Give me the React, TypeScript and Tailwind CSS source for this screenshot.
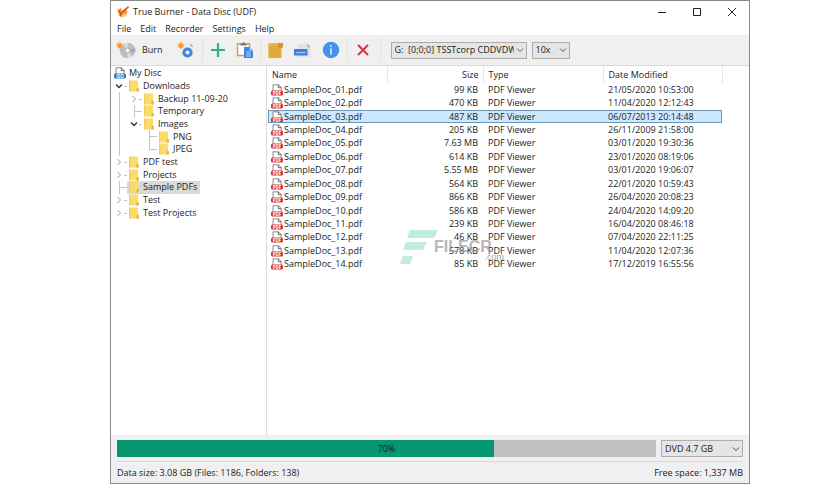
import React, { useState } from 'react';

type Guide = 'line' | 'blank' | 'open' | 'closed' | 'tee' | 'corner';

interface TreeNode {
    label: string;
    guides: Guide[];
}

interface DiscFile {
    name: string;
    size: string;
    modified: string;
}

const folders: TreeNode[] = [
    { label: 'Downloads', guides: ['open'] },
    { label: 'Backup 11-09-20', guides: ['line', 'closed'] },
    { label: 'Temporary', guides: ['line', 'tee'] },
    { label: 'Images', guides: ['line', 'open'] },
    { label: 'PNG', guides: ['line', 'blank', 'tee'] },
    { label: 'JPEG', guides: ['line', 'blank', 'corner'] },
    { label: 'PDF test', guides: ['closed'] },
    { label: 'Projects', guides: ['closed'] },
    { label: 'Sample PDFs', guides: ['tee'] },
    { label: 'Test', guides: ['closed'] },
    { label: 'Test Projects', guides: ['closed'] },
];

const files: DiscFile[] = [
    { name: 'SampleDoc_01.pdf', size: '99 KB', modified: '21/05/2020 10:53:00' },
    { name: 'SampleDoc_02.pdf', size: '470 KB', modified: '11/04/2020 12:12:43' },
    { name: 'SampleDoc_03.pdf', size: '487 KB', modified: '06/07/2013 20:14:48' },
    { name: 'SampleDoc_04.pdf', size: '205 KB', modified: '26/11/2009 21:58:00' },
    { name: 'SampleDoc_05.pdf', size: '7.63 MB', modified: '03/01/2020 19:30:36' },
    { name: 'SampleDoc_06.pdf', size: '614 KB', modified: '23/01/2020 08:19:06' },
    { name: 'SampleDoc_07.pdf', size: '5.55 MB', modified: '03/01/2020 19:06:07' },
    { name: 'SampleDoc_08.pdf', size: '564 KB', modified: '22/01/2020 10:59:43' },
    { name: 'SampleDoc_09.pdf', size: '866 KB', modified: '26/04/2020 20:08:23' },
    { name: 'SampleDoc_10.pdf', size: '586 KB', modified: '24/04/2020 14:09:20' },
    { name: 'SampleDoc_11.pdf', size: '239 KB', modified: '16/04/2020 08:46:18' },
    { name: 'SampleDoc_12.pdf', size: '46 KB', modified: '07/04/2020 22:11:25' },
    { name: 'SampleDoc_13.pdf', size: '578 KB', modified: '11/04/2020 12:07:36' },
    { name: 'SampleDoc_14.pdf', size: '85 KB', modified: '17/12/2019 16:55:56' },
];

const Flame = () => (
    <>
        <path d="M1 1.5 3 3 3.5 0 6 3 7 2.5 6.5 6 4.5 8 2 7 .5 4.5Z" fill="#fbb04c" />
        <path d="M3 4 4.5 3 5.5 5 4 7 2.5 6Z" fill="#f5813a" />
    </>
);

const AppIcon = () => (
    <svg viewBox="0 0 14 14" className="h-3.5 w-3.5">
        <path d="M1.5 3 3 4.5 4.5 2.5 6 5.5 12.5 1.5 10.5 5 11.5 7 9.5 11 6 12.5 3 11 2 7Z" fill="#f79a33" />
        <path d="M5 8.5 12.5 1.8" fill="none" stroke="#d9501e" strokeWidth="1.5" />
        <path d="M2.5 5.5 5 9l-.5 2" fill="none" stroke="#c9461c" strokeWidth="1.2" />
        <path d="M5 11 9.5 7.5 9 11 6 12.3Z" fill="#ffc65c" />
    </svg>
);

const BurnIcon = () => (
    <svg viewBox="0 0 20 18" className="h-[18px] w-5">
        <circle cx="11.5" cy="9.5" r="7.8" fill="#bdbdbf" />
        <path d="M11.5 9.5 7 3.2A8 8 0 0 1 12 1.7ZM11.5 9.5 16.5 15.5A8 8 0 0 1 11.5 17.3Z" fill="#dedee0" />
        <path d="m11.5 9.5 7.4-2.5a8 8 0 0 1 0 5Z" fill="#acacaf" />
        <circle cx="11.5" cy="9.5" r="2.6" fill="#e9e9ea" stroke="#a5a5a9" strokeWidth=".8" />
        <circle cx="11.5" cy="9.5" r="1" fill="#fff" />
        <Flame />
    </svg>
);

const BurnImageIcon = () => (
    <svg viewBox="0 0 18 18" className="h-[18px] w-[18px]">
        <path d="M5 2h8.500l3 3v11H5Z" fill="#e9ebee" />
        <path d="M13 2 16.500 5.500 14 6Z" fill="#a8b0bb" />
        <circle cx="10.500" cy="11.500" r="3.600" fill="#f0f0f0" stroke="#3f85e0" strokeWidth="3" />
        <Flame />
    </svg>
);

const PlusIcon = () => (
    <svg viewBox="0 0 16 16" className="h-4 w-4">
        <path d="M8 1v14M1 8h14" stroke="#2fb57c" strokeWidth="2.2" />
    </svg>
);

const PasteIcon = () => (
    <svg viewBox="0 0 18 18" className="h-[18px] w-[18px]">
        <path d="M1.500 3h12v11.500h-12Z" fill="#fff" stroke="#cf9a55" strokeWidth="1.4" />
        <path d="M4.500 4.500V2.500h1.800a1.200 1.200 0 0 1 2.400 0h1.800v2Z" fill="#747981" />
        <path d="M8 6h5.500L17 9.500v7.500H8Z" fill="#3f86e8" />
        <path d="M13.500 6 17 9.500h-3.500Z" fill="#b5d3fa" />
        <path d="M10 11h5M10 13h5M10 15h5" stroke="#cce0fb" strokeWidth=".8" />
    </svg>
);

const FolderBoxIcon = () => (
    <svg viewBox="0 0 17 18" className="h-[18px] w-[17px]">
        <path d="M1 2h15v4l-1.500 1v10H1Z" fill="#e3a83c" />
        <path d="M11 2h5v4l-1.500 1h-3Z" fill="#d39729" />
        <path d="M1 2h10v2.500H1Z" fill="#eab850" />
        <path d="M1 2h1.200v15H1Z" fill="#efc265" />
    </svg>
);

const RenameIcon = () => (
    <svg viewBox="0 0 18 18" className="h-[18px] w-[18px]">
        <path d="M4 3h9l3.500 3v10H4Z" fill="#dfe3e8" />
        <path d="M13 2.500 16.500 6l-2.500 .5Z" fill="#9ba3ad" />
        <path d="M0 8h13.500v6.500H0Z" fill="#3d80e0" />
        <path d="M2 11.700h9.500" stroke="#b5d3fa" strokeWidth="1" />
    </svg>
);

const InfoIcon = () => (
    <svg viewBox="0 0 18 18" className="h-[18px] w-[18px]">
        <circle cx="9" cy="9" r="8.2" fill="#4590ea" />
        <path d="M9 7.500v6" stroke="#fff" strokeWidth="1.3" />
        <circle cx="9" cy="5" r=".9" fill="#fff" />
    </svg>
);

const DeleteIcon = () => (
    <svg viewBox="0 0 14 14" className="h-3.5 w-3.5">
        <path d="m2 2 10 10M12 2 2 12" stroke="#dc3545" strokeWidth="2" />
    </svg>
);

const FolderIcon = () => (
    <svg viewBox="0 0 10 12" className="h-3 w-2.5 shrink-0">
        <path d="M0 .5h9v7l1 1.5v2.5H0Z" fill="#fbdc6b" />
        <path d="M7.5 8 9 7.5l1 1.5v2.5H7Z" fill="#e9bd42" />
        <path d="M0 .5h1.2v11H0Z" fill="#f2cd57" />
    </svg>
);

const PageIcon = ({ color, text }: { color: string; text: string }) => (
    <svg viewBox="0 0 12 12" className="h-3 w-3 shrink-0" aria-hidden="true">
        <path d="M2 11V.8h5.5L10.2 3.5V11" fill="#fff" stroke="#7c7f84" strokeWidth=".9" />
        <path d="M7.3.8v2.9h2.9" fill="none" stroke="#55585c" strokeWidth=".9" />
        <rect x="0" y="6.5" width="12" height="5" rx="1.5" fill={color} />
        <text x="6" y="10.7" textAnchor="middle" fontSize="4.5" fontWeight="700" fill="#fff">{text}</text>
    </svg>
);

const Chevron = () => (
    <svg viewBox="0 0 8 6" className="pointer-events-none absolute right-[3px] top-1/2 h-1.5 w-2 -translate-y-1/2">
        <path d="m1 1.5 3 3 3-3" fill="none" stroke="#555" strokeWidth="1" />
    </svg>
);

const GuideCell = ({ kind }: { kind: Guide }) => {
    if (kind === 'open' || kind === 'closed') {
        return (
            <button type="button" aria-label={kind === 'open' ? 'Collapse' : 'Expand'} className="flex w-[15px] items-center pl-[3px]">
                <svg viewBox="0 0 12 8" className="h-2 w-3">
                    {kind === 'open'
                        ? <path d="m1 2.5 3 3 3-3" fill="none" stroke="#333" strokeWidth="1.4" />
                        : <path d="m2.5 1 3 3-3 3" fill="none" stroke="#999" strokeWidth="1" />}
                    <path d="M9 4.5h3" stroke="#c4c4c4" />
                </svg>
            </button>
        );
    }
    return (
        <span className="flex w-[15px] flex-col pl-[7px]">
            <span className={kind === 'blank' ? 'flex-1' : kind === 'line' ? 'flex-1 border-l border-[#c4c4c4]' : 'flex-1 border-b border-l border-[#c4c4c4]'} />
            <span className={kind === 'line' || kind === 'tee' ? 'flex-1 border-l border-[#c4c4c4]' : 'flex-1'} />
        </span>
    );
};

const Separator = () => <span className="h-6 w-px bg-[#e2e2e2]" />;

const toolButton = 'flex items-center justify-center shrink-0';

export default function App() {
    const [selectedFolder, setSelectedFolder] = useState('Sample PDFs');
    const [selectedFile, setSelectedFile] = useState('SampleDoc_03.pdf');
    const used = 70;

    return (
        <div className="min-h-screen bg-white pl-[110px] pr-[86px] font-['Open_Sans','Noto_Sans',sans-serif] text-[9px] leading-3 text-[#1c1c1c]">
            <div className="flex min-h-screen flex-col border border-[#8a8a8a]">
                <header className="flex h-[21px] items-center pl-[5px]">
                    <AppIcon />
                    <h1 className="ml-[3px] flex-1">True Burner - Data Disc (UDF)</h1>
                    <div className="flex items-center gap-[25px] pr-3 text-[#222]">
                        <button type="button" aria-label="Minimize">
                            <svg viewBox="0 0 10 10" className="h-2.5 w-2.5"><path d="M1 5.5h8" stroke="currentColor" /></svg>
                        </button>
                        <button type="button" aria-label="Maximize">
                            <svg viewBox="0 0 10 10" className="h-2.5 w-2.5"><path d="M1.5 1.5h7v7h-7Z" fill="none" stroke="currentColor" /></svg>
                        </button>
                        <button type="button" aria-label="Close">
                            <svg viewBox="0 0 10 10" className="h-2.5 w-2.5"><path d="m1 1 8 8M9 1 1 9" stroke="currentColor" /></svg>
                        </button>
                    </div>
                </header>

                <nav className="flex h-[13px] items-center gap-[9px] pl-1.5">
                    <button type="button">File</button>
                    <button type="button">Edit</button>
                    <button type="button">Recorder</button>
                    <button type="button">Settings</button>
                    <button type="button">Help</button>
                </nav>

                <div className="flex h-[31px] items-center border-b border-[#dadada] bg-[#f0f0f0] pl-[5px]">
                    <button type="button" className={`${toolButton} mr-3.5 gap-1.5`}><BurnIcon />Burn</button>
                    <button type="button" aria-label="Burn image" className={`${toolButton} mr-[7px]`}><BurnImageIcon /></button>
                    <Separator />
                    <button type="button" aria-label="Add" className={`${toolButton} ml-[7px] mr-2.5`}><PlusIcon /></button>
                    <button type="button" aria-label="Paste" className={`${toolButton} mr-1.5`}><PasteIcon /></button>
                    <Separator />
                    <button type="button" aria-label="New folder" className={`${toolButton} ml-1.5 mr-2.5`}><FolderBoxIcon /></button>
                    <button type="button" aria-label="Rename" className={`${toolButton} mr-2.5`}><RenameIcon /></button>
                    <button type="button" aria-label="Properties" className={`${toolButton} mr-[7px]`}><InfoIcon /></button>
                    <Separator />
                    <button type="button" aria-label="Delete" className={`${toolButton} ml-2 mr-2.5`}><DeleteIcon /></button>
                    <Separator />
                    <div className="relative ml-2.5 w-[136px]">
                        <select aria-label="Recorder" className="h-[17px] w-full appearance-none overflow-hidden border border-[#adadad] bg-[#e5e5e5] pl-[3px] pr-3">
                            <option>{'G:\u00a0 [0;0;0] TSSTcorp CDDVDW'}</option>
                        </select>
                        <Chevron />
                    </div>
                    <div className="relative ml-[5px] w-[38px]">
                        <select aria-label="Speed" className="h-[17px] w-full appearance-none border border-[#adadad] bg-[#e5e5e5] pl-[3px] pr-3">
                            <option>10x</option>
                        </select>
                        <Chevron />
                    </div>
                </div>

                <main className="flex flex-1">
                    <aside className="w-[156px] shrink-0 border-r border-[#dcdcdc] pl-px pt-px">
                        <div className="grid h-[152px] auto-rows-fr">
                            <div className="flex items-center gap-[3px] pl-0.5">
                                <PageIcon color="#2f76b8" text="ISO" />
                                My Disc
                            </div>
                            {folders.map((folder) => (
                                <div key={folder.label} className="flex">
                                    {folder.guides.map((kind, i) => <GuideCell key={i} kind={kind} />)}
                                    <button
                                        type="button"
                                        onClick={() => setSelectedFolder(folder.label)}
                                        className={`flex items-center gap-1 whitespace-nowrap pl-0.5 pr-[3px] ${selectedFolder === folder.label ? 'bg-[#d9d9d9]' : ''}`}
                                    >
                                        <FolderIcon />
                                        {folder.label}
                                    </button>
                                </div>
                            ))}
                        </div>
                    </aside>

                    <section className="relative min-w-0 flex-1 pl-px">
                        <table className="h-[205px] w-[454px] table-fixed border-collapse text-left">
                            <colgroup>
                                <col className="w-[119px]" />
                                <col className="w-24" />
                                <col className="w-[120px]" />
                                <col className="w-[119px]" />
                            </colgroup>
                            <thead>
                                <tr className="h-[17px]">
                                    <th className="border-r border-[#e5e5e5] p-0 pl-1 font-normal">Name</th>
                                    <th className="border-r border-[#e5e5e5] p-0 pr-1 text-right font-normal">Size</th>
                                    <th className="border-r border-[#e5e5e5] p-0 pl-[5px] font-normal">Type</th>
                                    <th className="border-r border-[#e5e5e5] p-0 pl-[5px] font-normal">Date Modified</th>
                                </tr>
                            </thead>
                            <tbody>
                                {files.map((file) => (
                                    <tr
                                        key={file.name}
                                        onClick={() => setSelectedFile(file.name)}
                                        className={selectedFile === file.name ? 'bg-[#cce8ff] outline outline-1 -outline-offset-1 outline-[#6f97b3]' : ''}
                                    >
                                        <td className="p-0 pl-[3px]">
                                            <span className="flex items-center gap-px"><PageIcon color="#d43238" text="PDF" />{file.name}</span>
                                        </td>
                                        <td className="p-0 pr-[5px] text-right">{file.size}</td>
                                        <td className="p-0 pl-[5px]">PDF Viewer</td>
                                        <td className="p-0 pl-[5px]">{file.modified}</td>
                                    </tr>
                                ))}
                            </tbody>
                        </table>

                        <div className="pointer-events-none absolute left-[133px] top-[163px] flex opacity-70">
                            <svg viewBox="0 0 38 36" className="h-9 w-[38px]">
                                <path d="M10 1h28l-4 8H7ZM6 13h21l-4 8H3ZM3 27h10l-3 8H0Z" fill="#a9e5d0" />
                            </svg>
                            <div className="-ml-1 flex w-[70px] flex-col pt-2.5 font-['Liberation_Sans',sans-serif] text-[#999]">
                                <span className="text-base font-bold leading-4">FILECR</span>
                                <span className="-mt-0.5 self-end text-[9px] leading-2 text-[#777]">.com</span>
                            </div>
                        </div>
                    </section>
                </main>

                <footer className="bg-[#f0f0f0] px-1.5 pt-[5px]">
                    <div className="flex gap-[5px] border-b border-[#dadada] pb-1">
                        <div
                            role="progressbar"
                            aria-label="Disc usage"
                            aria-valuenow={used}
                            className="grid h-[17px] flex-1 bg-[#c0c0c0]"
                        >
                            <div className="col-start-1 row-start-1 bg-[#069670]" style={{ width: `${used}%` }} />
                            <span className="col-start-1 row-start-1 self-center text-center">{used}%</span>
                        </div>
                        <div className="relative w-[82px]">
                            <select aria-label="Disc size" className="h-[17px] w-full appearance-none border border-[#adadad] bg-[#e5e5e5] pl-[3px] pr-3">
                                <option>DVD 4.7 GB</option>
                            </select>
                            <Chevron />
                        </div>
                    </div>
                    <div className="flex h-[21px] items-center justify-between">
                        <span>Data size: 3.08 GB (Files: 1186, Folders: 138)</span>
                        <span>Free space: 1,337 MB</span>
                    </div>
                </footer>
            </div>
        </div>
    );
}
